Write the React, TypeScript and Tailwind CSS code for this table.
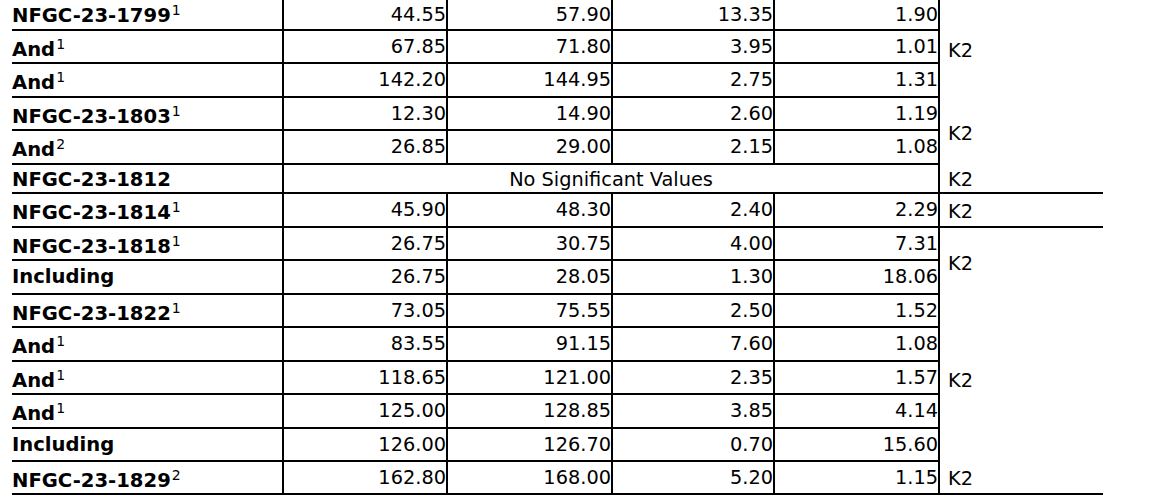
import React from 'react'

type Row = {
  label: string
  sup?: string
  values?: string[]
  height: number
}

const rows: Row[] = [
  { label: 'NFGC-23-1799', sup: '1', values: ['44.55', '57.90', '13.35', '1.90'], height: 31 },
  { label: 'And', sup: '1', values: ['67.85', '71.80', '3.95', '1.01'], height: 33 },
  { label: 'And', sup: '1', values: ['142.20', '144.95', '2.75', '1.31'], height: 34 },
  { label: 'NFGC-23-1803', sup: '1', values: ['12.30', '14.90', '2.60', '1.19'], height: 33 },
  { label: 'And', sup: '2', values: ['26.85', '29.00', '2.15', '1.08'], height: 34 },
  { label: 'NFGC-23-1812', height: 29 },
  { label: 'NFGC-23-1814', sup: '1', values: ['45.90', '48.30', '2.40', '2.29'], height: 34 },
  { label: 'NFGC-23-1818', sup: '1', values: ['26.75', '30.75', '4.00', '7.31'], height: 33 },
  { label: 'Including', values: ['26.75', '28.05', '1.30', '18.06'], height: 34 },
  { label: 'NFGC-23-1822', sup: '1', values: ['73.05', '75.55', '2.50', '1.52'], height: 33 },
  { label: 'And', sup: '1', values: ['83.55', '91.15', '7.60', '1.08'], height: 34 },
  { label: 'And', sup: '1', values: ['118.65', '121.00', '2.35', '1.57'], height: 33 },
  { label: 'And', sup: '1', values: ['125.00', '128.85', '3.85', '4.14'], height: 34 },
  { label: 'Including', values: ['126.00', '126.70', '0.70', '15.60'], height: 33 },
  { label: 'NFGC-23-1829', sup: '2', values: ['162.80', '168.00', '5.20', '1.15'], height: 33 },
]

// zone column: first row of each group -> rowspan + whether it carries a bottom rule
const zones: Record<number, { span: number; ruled: boolean }> = {
  0: { span: 3, ruled: false },
  3: { span: 2, ruled: false },
  5: { span: 1, ruled: true },
  6: { span: 1, ruled: true },
  7: { span: 2, ruled: false },
  9: { span: 5, ruled: false },
  14: { span: 1, ruled: true },
}

function Label({ row, index }: { row: Row; index: number }) {
  const pad = row.sup ? (index === 0 ? 'pt-[3px]' : 'pt-[6px]') : row.values ? 'pt-0' : 'pt-[3px]'
  return (
    <td className={`border-b-2 border-black p-0 align-middle text-left font-bold whitespace-nowrap text-[19.6px] ${pad}`}>
      {row.label}
      {row.sup && (
        <span className="relative -top-[7px] pl-px text-[14px] leading-none font-normal">{row.sup}</span>
      )}
    </td>
  )
}

export default function App() {
  return (
    <div className="w-[1149px] h-[496px] overflow-hidden bg-white">
      <table className="ml-3 w-[1091px] table-fixed border-separate border-spacing-0 text-[19.33px] leading-[22px] text-black font-['DejaVu_Sans',sans-serif]">
        <colgroup>
          <col className="w-[270px]" />
          <col className="w-[164px]" />
          <col className="w-[165px]" />
          <col className="w-[162px]" />
          <col className="w-[167px]" />
          <col className="w-[163px]" />
        </colgroup>
        <tbody>
          {rows.map((row, i) => {
            const zone = zones[i]
            return (
              <tr key={i} style={{ height: row.height }}>
                <Label row={row} index={i} />
                {row.values ? (
                  row.values.map((v, j) => (
                    <td
                      key={j}
                      className={`border-b-2 border-l-2 border-black p-0 align-middle text-right whitespace-nowrap ${j === 3 ? 'border-r-2' : ''}`}
                    >
                      {v}
                    </td>
                  ))
                ) : (
                  <td colSpan={4} className="border-b-2 border-l-2 border-r-2 border-black p-0 pt-[3px] align-middle text-center">
                    No Significant Values
                  </td>
                )}
                {zone && (
                  <td
                    rowSpan={zone.span}
                    className={`p-0 pl-2 align-middle text-left ${zone.span === 1 ? 'pt-[3px]' : 'pt-[4px]'} ${zone.ruled ? 'border-b-2 border-black' : ''}`}
                  >
                    K2
                  </td>
                )}
              </tr>
            )
          })}
        </tbody>
      </table>
    </div>
  )
}
